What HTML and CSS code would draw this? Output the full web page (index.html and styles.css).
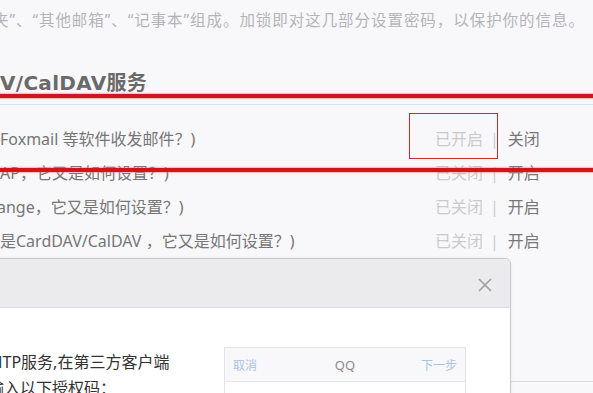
FILE: index.html
```html
<!DOCTYPE html>
<html lang="zh-CN">
<head>
<meta charset="utf-8">
<title>设置</title>
<link rel="stylesheet" href="styles.css">
</head>
<body>
<div class="page">
  <p class="intro">夹”、“其他邮箱”、“记事本”组成。加锁即对这几部分设置密码，以保护你的信息。</p>
  <h2 class="title">V/CalDAV服务</h2>
  <div class="rows">
    <div class="row">
      <span class="q">Foxmail 等软件收发邮件？)</span>
      <span class="ctl"><span class="state">已开启</span><span class="sep">|</span><span class="act">关闭</span></span>
    </div>
    <div class="row">
      <span class="q">AP，它又是如何设置？)</span>
      <span class="ctl"><span class="state">已关闭</span><span class="sep">|</span><span class="act">开启</span></span>
    </div>
    <div class="row">
      <span class="q q-shift">ange，它又是如何设置？)</span>
      <span class="ctl"><span class="state">已关闭</span><span class="sep">|</span><span class="act">开启</span></span>
    </div>
    <div class="row">
      <span class="q">是CardDAV/CalDAV ，它又是如何设置？)</span>
      <span class="ctl"><span class="state">已关闭</span><span class="sep">|</span><span class="act">开启</span></span>
    </div>
  </div>
  <div class="page-end"></div>
</div>

<div class="mark-line mark-line-1"></div>
<div class="mark-line mark-line-2"></div>
<div class="mark-box"></div>

<div class="dialog">
  <div class="dialog-head">
    <svg class="close" width="14" height="14" viewBox="0 0 14 14"><path d="M1.5 1.5 L12.5 12.5 M12.5 1.5 L1.5 12.5" stroke="#a0a0a0" stroke-width="1.7" fill="none" stroke-linecap="round"/></svg>
  </div>
  <div class="dialog-body">
    <div class="dialog-text">
      <p class="line">MTP服务,在第三方客户端</p>
      <p class="line">输入以下授权码：</p>
    </div>
    <div class="phone">
      <div class="phone-head">
        <span class="ph-link ph-left">取消</span>
        <span class="ph-title">QQ</span>
        <span class="ph-link ph-right">下一步</span>
      </div>
      <div class="phone-body"></div>
    </div>
  </div>
</div>
</body>
</html>
```
FILE: styles.css
```css
html, body {
  margin: 0;
  padding: 0;
}
body {
  width: 593px;
  height: 393px;
  overflow: hidden;
  position: relative;
  background: #f8f8fb;
  font-family: "Noto Sans", "Noto Sans CJK SC", sans-serif;
}
.page {
  padding-top: 10px;
}
.intro {
  margin: 0 0 0 -7px;
  font-size: 15.5px;
  line-height: 20px;
  letter-spacing: 0.95px;
  color: #b4b4b8;
  white-space: nowrap;
}
.title {
  margin: 39px 0 0 0;
  padding-bottom: 7px;
  border-bottom: 1px solid #dde2ea;
  font-family: "DejaVu Sans", "Noto Sans CJK SC", sans-serif;
  font-size: 20px;
  line-height: 28px;
  letter-spacing: 0.3px;
  font-weight: bold;
  color: #6a6a6a;
  white-space: nowrap;
}
.rows {
  padding-top: 17px;
}
.row {
  display: grid;
  grid-template-columns: 435px auto;
  height: 34px;
  line-height: 34px;
  font-size: 16px;
  white-space: nowrap;
}
.q {
  color: #767676;
  overflow: hidden;
}
.q-shift {
  margin-left: -3px;
}
.ctl {
  font-size: 16px;
  display: flex;
  align-items: center;
}
.state {
  color: #cacace;
}
.sep {
  color: #cacace;
  margin: 0 9px 0 7px;
}
.act {
  color: #777;
}
.page-end {
  margin-top: 123px;
  border-top: 1px solid #dcdce2;
}

.mark-line {
  position: absolute;
  left: 0;
  width: 593px;
  height: 4px;
  background: #d2141c;
  box-shadow: 0 0 1.5px 1px rgba(230, 120, 130, 0.5);
}
.mark-line-1 {
  top: 94px;
}
.mark-line-2 {
  top: 168px;
}
.mark-box {
  position: absolute;
  left: 409px;
  top: 113px;
  width: 87px;
  height: 44px;
  border: 1.5px solid #d0262e;
}

.dialog {
  position: absolute;
  left: -10px;
  top: 258px;
  width: 519px;
  height: 160px;
  background: #fff;
  border: 1px solid #c8c8cc;
  border-radius: 6px;
  overflow: hidden;
  box-shadow: 0 0 3px rgba(0, 0, 0, 0.08);
}
.dialog-head {
  height: 48px;
  background: #ebebed;
  border-bottom: 1px solid #dcdcdf;
  display: flex;
  align-items: center;
  justify-content: flex-end;
  padding-right: 18px;
}
.close {
  display: block;
  margin-top: 4px;
}
.dialog-body {
  display: flex;
  padding-top: 39px;
}
.dialog-text {
  width: 233px;
  margin-top: 2px;
  overflow: hidden;
}
.line {
  margin: 0;
  font-size: 16px;
  line-height: 26px;
  color: #333;
  white-space: nowrap;
  text-indent: -3px;
}
.phone {
  width: 240px;
  border: 1px solid #e4e4e8;
  border-bottom: none;
}
.phone-head {
  height: 33px;
  background: #f8f8fa;
  border-bottom: 1px solid #e8e8ec;
  display: grid;
  grid-template-columns: 1fr auto 1fr;
  align-items: center;
  padding: 0 8px;
  font-size: 12px;
}
.ph-link {
  color: #a9c4e2;
}
.ph-left {
  text-align: left;
}
.ph-right {
  text-align: right;
}
.ph-title {
  color: #8c8c8c;
  font-size: 13px;
}
.phone-body {
  height: 60px;
  background: #fff;
}
```
